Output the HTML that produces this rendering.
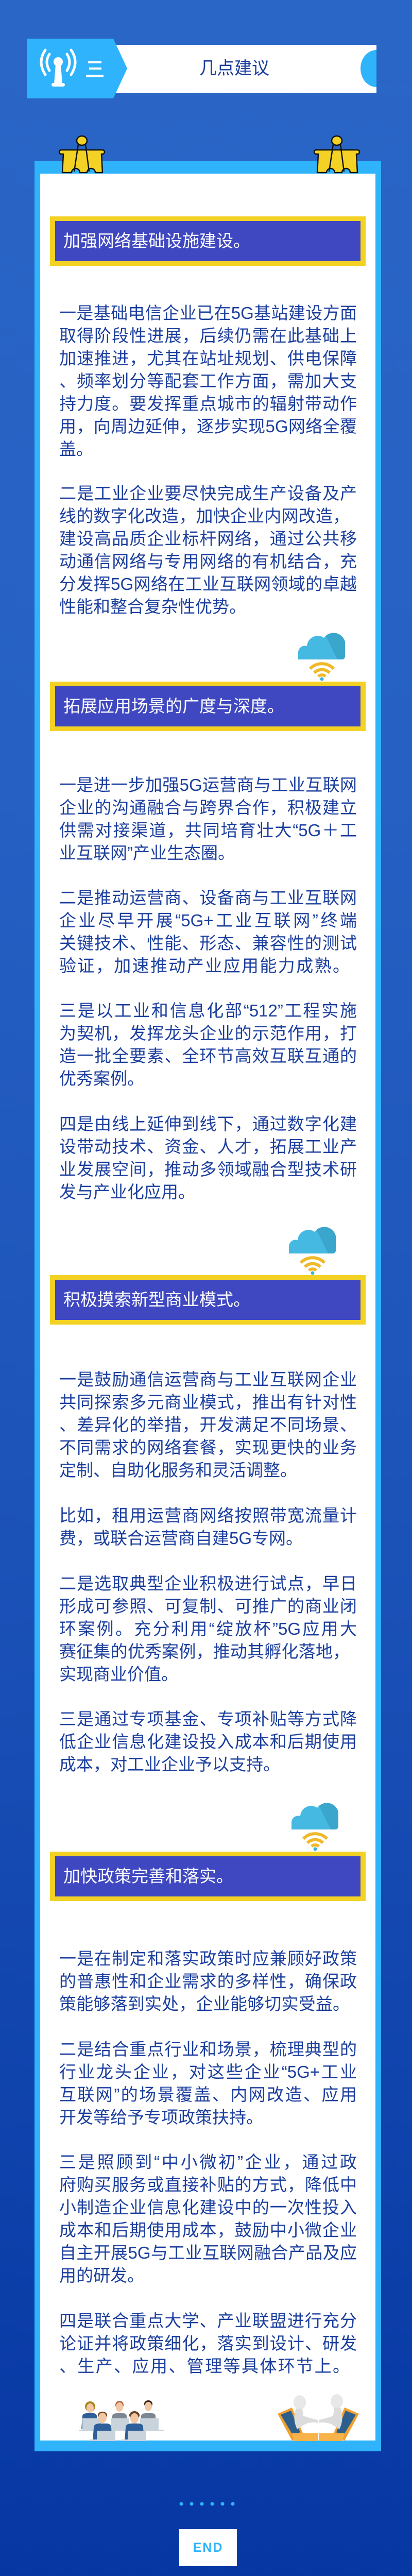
<!DOCTYPE html>
<html style="height:5033px;overflow:hidden"><head><meta charset="utf-8">
<style>
*{margin:0;padding:0;box-sizing:border-box}
html{width:800px;height:5033px;overflow:hidden}
body{width:800px;height:5033px;position:relative;overflow:hidden;
background:linear-gradient(180deg,#2a66c6 0%,#2660c3 30%,#1b52b8 60%,#0636a2 100%);
font-family:"Liberation Sans","Noto Sans CJK SC",sans-serif}
.a{position:absolute}
.card{left:67px;top:312px;width:673px;height:4446px;background:#2fb4fc}
.inner{left:78px;top:337px;width:651px;height:4400px;background:#fff}
.hd{left:97px;width:613px;height:96px;background:#f3d225;padding:9px 10px}
.hd div{width:100%;height:100%;background:#3f48c0;color:#fff;font-size:33px;line-height:78px;padding-left:16px;white-space:nowrap;overflow:hidden}
.p{left:115px;width:578px;height:300px;color:#1c3f9e;font-size:33px;line-height:44px;font-family:"Liberation Sans","Noto Sans CJK SC",sans-serif}
.p div{height:44px;white-space:nowrap;overflow:hidden}
.p .j{text-align:justify;text-align-last:justify;white-space:normal}
.p .k{text-align:justify;text-align-last:justify;white-space:normal;width:564px}
</style></head><body>

<div class="a" style="left:225px;top:87px;width:506px;height:93px;background:#fff;overflow:hidden">
  <div class="a" style="left:475px;top:10px;width:62px;height:72px;border-radius:50%;background:#2fb4fc"></div>
</div>
<svg class="a" style="left:52px;top:75px" width="200" height="116" viewBox="0 0 200 116">
  <polygon points="0,0 168,0 195,58 168,116 0,116" fill="#2eb3fc"/>
  <g fill="none" stroke="#fff" stroke-width="5" stroke-linecap="round">
    <path d="M44 30 Q34 45 44 62"/><path d="M36 22 Q20 45 36 70"/>
    <path d="M78 30 Q88 45 78 62"/><path d="M86 22 Q102 45 86 70"/>
  </g>
  <circle cx="61" cy="45" r="9" fill="#fff"/>
  <path d="M56 50 L66 50 L69 88 L53 88 Z" fill="#fff"/>
  <rect x="48" y="86" width="26" height="7" rx="3.5" fill="#fff"/>
  <rect x="119" y="44" width="26" height="4" fill="#fff"/>
  <rect x="121" y="56" width="24" height="4" fill="#fff"/>
  <rect x="115" y="70" width="34" height="5" fill="#fff"/>
</svg>
<div class="a" style="left:375px;top:109px;width:160px;font-size:34px;line-height:48px;color:#1b3c9e;text-align:center">几点建议</div>

<div class="a card"></div>
<div class="a inner"></div>

<svg class="a" style="left:113px;top:262px" width="92" height="76" viewBox="0 0 92 76">
  <g stroke="#111" stroke-width="2.5" stroke-linejoin="round">
    <path d="M6 29 H86 a4 4 0 0 1 0 8 H84 L86 73 H72 a8 8 0 0 0 -16 0 H42 a8 8 0 0 0 -16 0 H8 L10 37 H6 a4 4 0 0 1 0 -8 Z" fill="#f3d225"/>
    <line x1="39" y1="18" x2="31" y2="71" fill="none"/>
    <line x1="53" y1="18" x2="60" y2="71" fill="none"/>
    <ellipse cx="46" cy="11" rx="10" ry="9" fill="#f3d225"/>
  </g>
</svg>
<svg class="a" style="left:608px;top:262px" width="92" height="76" viewBox="0 0 92 76">
  <g stroke="#111" stroke-width="2.5" stroke-linejoin="round">
    <path d="M6 29 H86 a4 4 0 0 1 0 8 H84 L86 73 H72 a8 8 0 0 0 -16 0 H42 a8 8 0 0 0 -16 0 H8 L10 37 H6 a4 4 0 0 1 0 -8 Z" fill="#f3d225"/>
    <line x1="39" y1="18" x2="31" y2="71" fill="none"/>
    <line x1="53" y1="18" x2="60" y2="71" fill="none"/>
    <ellipse cx="46" cy="11" rx="10" ry="9" fill="#f3d225"/>
  </g>
</svg>

<div class="a hd" style="top:420px"><div>加强网络基础设施建设。</div></div>
<div class="a p" style="top:586px">
<div class="j">一是基础电信企业已在5G基站建设方面</div>
<div class="j">取得阶段性进展，后续仍需在此基础上</div>
<div class="j">加速推进，尤其在站址规划、供电保障</div>
<div class="j">、频率划分等配套工作方面，需加大支</div>
<div class="j">持力度。要发挥重点城市的辐射带动作</div>
<div class="j">用，向周边延伸，逐步实现5G网络全覆</div>
<div>盖。</div>
</div>
<div class="a p" style="top:936px">
<div class="j">二是工业企业要尽快完成生产设备及产</div>
<div class="k">线的数字化改造，加快企业内网改造，</div>
<div class="j">建设高品质企业标杆网络，通过公共移</div>
<div class="j">动通信网络与专用网络的有机结合，充</div>
<div class="j">分发挥5G网络在工业互联网领域的卓越</div>
<div>性能和整合复杂性优势。</div>
</div>

<svg width="0" height="0" style="position:absolute;left:0;top:0">
  <defs>
    <clipPath id="cc"><path d="M1 66 V52 a13 13 0 0 1 17 -12 a21 21 0 0 1 33 -16 a23 23 0 0 1 41 8 V60 a6 6 0 0 1 -6 6 Z"/></clipPath>
    <g id="cloud">
      <g clip-path="url(#cc)">
        <rect x="0" y="0" width="93" height="66" fill="#45b9e2"/>
        <polygon points="45,0 93,0 93,66 77,66" fill="#3aa6cc"/>
      </g>
      <g fill="none" stroke-width="6">
        <path d="M24 84 A32 32 0 0 1 70 84" stroke="#f0b92a"/>
        <path d="M32 92 A21 21 0 0 1 62 92" stroke="#f0b92a"/>
        <path d="M40 99 A10 10 0 0 1 54 99" stroke="#f0b92a"/>
      </g>
      <circle cx="47" cy="104" r="3.5" fill="#3ab0dc"/>
    </g>
  </defs>
</svg>
<svg class="a" style="left:578px;top:1214px" width="94" height="108" viewBox="0 0 94 108"><use href="#cloud"/></svg>

<div class="a hd" style="top:1323px"><div>拓展应用场景的广度与深度。</div></div>
<div class="a p" style="top:1502px">
<div class="j">一是进一步加强5G运营商与工业互联网</div>
<div class="j">企业的沟通融合与跨界合作，积极建立</div>
<div class="j">供需对接渠道，共同培育壮大“5G＋工</div>
<div>业互联网”产业生态圈。</div>
</div>
<div class="a p" style="top:1721px">
<div class="j">二是推动运营商、设备商与工业互联网</div>
<div class="j">企业尽早开展“5G+工业互联网”终端</div>
<div class="j">关键技术、性能、形态、兼容性的测试</div>
<div class="k">验证，加速推动产业应用能力成熟。</div>
</div>
<div class="a p" style="top:1940px">
<div class="j">三是以工业和信息化部“512”工程实施</div>
<div class="j">为契机，发挥龙头企业的示范作用，打</div>
<div class="j">造一批全要素、全环节高效互联互通的</div>
<div>优秀案例。</div>
</div>
<div class="a p" style="top:2160px">
<div class="j">四是由线上延伸到线下，通过数字化建</div>
<div class="j">设带动技术、资金、人才，拓展工业产</div>
<div class="j">业发展空间，推动多领域融合型技术研</div>
<div>发与产业化应用。</div>
</div>
<svg class="a" style="left:560px;top:2367px" width="94" height="108" viewBox="0 0 94 108"><use href="#cloud"/></svg>

<div class="a hd" style="top:2475px"><div>积极摸索新型商业模式。</div></div>
<div class="a p" style="top:2656px">
<div class="j">一是鼓励通信运营商与工业互联网企业</div>
<div class="j">共同探索多元商业模式，推出有针对性</div>
<div class="j">、差异化的举措，开发满足不同场景、</div>
<div class="j">不同需求的网络套餐，实现更快的业务</div>
<div>定制、自助化服务和灵活调整。</div>
</div>
<div class="a p" style="top:2920px">
<div class="j">比如，租用运营商网络按照带宽流量计</div>
<div>费，或联合运营商自建5G专网。</div>
</div>
<div class="a p" style="top:3052px">
<div class="j">二是选取典型企业积极进行试点，早日</div>
<div class="j">形成可参照、可复制、可推广的商业闭</div>
<div class="j">环案例。充分利用“绽放杯”5G应用大</div>
<div class="k">赛征集的优秀案例，推动其孵化落地，</div>
<div>实现商业价值。</div>
</div>
<div class="a p" style="top:3315px">
<div class="j">三是通过专项基金、专项补贴等方式降</div>
<div class="j">低企业信息化建设投入成本和后期使用</div>
<div>成本，对工业企业予以支持。</div>
</div>
<svg class="a" style="left:565px;top:3485px" width="94" height="108" viewBox="0 0 94 108"><use href="#cloud"/></svg>

<div class="a hd" style="top:3594px"><div>加快政策完善和落实。</div></div>
<div class="a p" style="top:3780px">
<div class="j">一是在制定和落实政策时应兼顾好政策</div>
<div class="j">的普惠性和企业需求的多样性，确保政</div>
<div class="k">策能够落到实处，企业能够切实受益。</div>
</div>
<div class="a p" style="top:3956px">
<div class="j">二是结合重点行业和场景，梳理典型的</div>
<div class="j">行业龙头企业，对这些企业“5G+工业</div>
<div class="j">互联网”的场景覆盖、内网改造、应用</div>
<div>开发等给予专项政策扶持。</div>
</div>
<div class="a p" style="top:4175px">
<div class="j">三是照顾到“中小微初”企业，通过政</div>
<div class="j">府购买服务或直接补贴的方式，降低中</div>
<div class="j">小制造企业信息化建设中的一次性投入</div>
<div class="j">成本和后期使用成本，鼓励中小微企业</div>
<div class="j">自主开展5G与工业互联网融合产品及应</div>
<div>用的研发。</div>
</div>
<div class="a p" style="top:4483px;height:140px">
<div class="j">四是联合重点大学、产业联盟进行充分</div>
<div class="j">论证并将政策细化，落实到设计、研发</div>
<div class="k">、生产、应用、管理等具体环节上。</div>
</div>

<svg class="a" style="left:154px;top:4654px" width="164" height="84" viewBox="0 0 164 84">
  <path d="M6 36 Q6 30 16 30 L26 30 Q34 30 34 36 L36 60 L4 60 Z" fill="#2e5f99"/>
  <circle cx="21" cy="17" r="10" fill="#a7861e"/><ellipse cx="21" cy="20" rx="7" ry="9" fill="#f2c8a4"/>
  <path d="M64 36 Q64 30 74 30 L84 30 Q92 30 92 36 L94 60 L62 60 Z" fill="#7d8793"/>
  <ellipse cx="78" cy="14" rx="8" ry="8" fill="#b5603e"/><ellipse cx="78" cy="18" rx="7" ry="9" fill="#f2c8a4"/>
  <path d="M120 36 Q120 30 130 30 L140 30 Q148 30 148 36 L150 60 L118 60 Z" fill="#7d8793"/>
  <ellipse cx="134" cy="12" rx="8" ry="7" fill="#3a2418"/><ellipse cx="134" cy="17" rx="7" ry="9" fill="#f2c8a4"/>
  <rect x="6" y="40" width="36" height="24" fill="#c9d3dc"/><rect x="0" y="62" width="60" height="3" fill="#c9d3dc"/>
  <rect x="62" y="40" width="34" height="24" fill="#c9d3dc"/>
  <rect x="118" y="40" width="36" height="24" fill="#c9d3dc"/><rect x="116" y="62" width="48" height="3" fill="#c9d3dc"/>
  <path d="M28 58 Q28 50 40 50 L52 50 Q62 50 62 58 L64 84 L26 84 Z" fill="#2e5f99"/>
  <ellipse cx="45" cy="34" rx="9" ry="7" fill="#6b4322"/><ellipse cx="45" cy="39" rx="8" ry="10" fill="#f2c8a4"/>
  <path d="M90 58 Q90 50 102 50 L114 50 Q124 50 124 58 L126 84 L88 84 Z" fill="#2e5f99"/>
  <ellipse cx="107" cy="34" rx="10" ry="8" fill="#6b4322"/><ellipse cx="107" cy="40" rx="8" ry="10" fill="#f2c8a4"/>
  <rect x="34" y="64" width="36" height="20" fill="#c9d3dc"/><rect x="20" y="81" width="48" height="3" fill="#c9d3dc"/>
  <rect x="94" y="64" width="36" height="20" fill="#c9d3dc"/><rect x="82" y="81" width="48" height="3" fill="#c9d3dc"/>
</svg>
<svg class="a" style="left:537px;top:4645px" width="162" height="93" viewBox="0 0 162 93">
  <path d="M2 40 L30 28 L52 80 L30 92 Z" fill="#f0a030"/>
  <path d="M8 42 L28 34 L46 76 L32 82 Z" fill="#2c5f8c"/>
  <path d="M160 40 L132 28 L110 80 L132 92 Z" fill="#f0a030"/>
  <path d="M154 42 L134 34 L116 76 L130 82 Z" fill="#2c5f8c"/>
  <path d="M30 78 L80 78 L80 93 L34 93 Z" fill="#f7b24a"/>
  <path d="M82 78 L132 78 L128 93 L82 93 Z" fill="#f7b24a"/>
  <ellipse cx="45" cy="18" rx="12" ry="14" fill="#e8e8e8"/>
  <path d="M38 30 Q30 50 40 70 L56 60 Q70 55 80 58 L80 52 Q62 48 52 44 L50 30 Z" fill="#dcdcdc"/>
  <ellipse cx="117" cy="16" rx="12" ry="14" fill="#e8e8e8"/>
  <path d="M124 28 Q132 50 122 70 L106 60 Q92 55 82 58 L82 52 Q100 48 110 44 L112 28 Z" fill="#dcdcdc"/>
</svg>

<svg class="a" style="left:345px;top:4853px" width="115" height="14">
  <g fill="#2fb4f8"><circle cx="7" cy="7" r="3.5"/><circle cx="27" cy="7" r="3.5"/><circle cx="47" cy="7" r="3.5"/><circle cx="67" cy="7" r="3.5"/><circle cx="87" cy="7" r="3.5"/><circle cx="107" cy="7" r="3.5"/></g>
</svg>
<div class="a" style="left:348px;top:4909px;width:112px;height:72px;background:#fff;color:#2fb4f8;font-weight:bold;font-size:25px;line-height:72px;text-align:center;letter-spacing:2px;font-family:'Liberation Sans',sans-serif">END</div>

</body></html>
